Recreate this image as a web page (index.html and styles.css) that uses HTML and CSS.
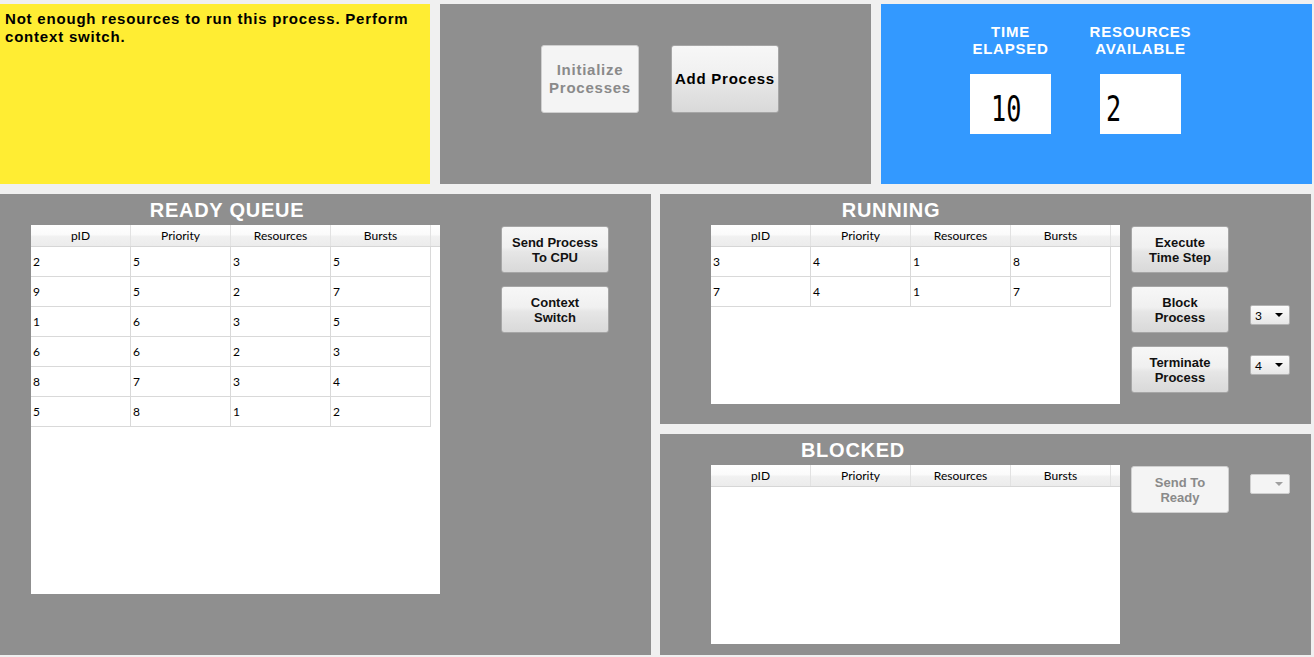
FILE: index.html
```html
<!DOCTYPE html>
<html>
<head>
<meta charset="utf-8">
<title>Process Scheduler</title>
<link rel="stylesheet" href="styles.css">
</head>
<body>
<div class="app">
  <div class="top">
    <div class="msg">Not enough resources to run this process. Perform context switch.</div>
    <div class="controls">
      <button class="btn btn-lg btn-init" disabled>Initialize Processes</button>
      <button class="btn btn-lg btn-add">Add Process</button>
    </div>
    <div class="stats">
      <div class="stat">
        <div class="stat-label">TIME<br>ELAPSED</div>
        <div class="lcd lcd-time"><span class="lcd-num">10</span></div>
      </div>
      <div class="stat">
        <div class="stat-label">RESOURCES<br>AVAILABLE</div>
        <div class="lcd lcd-res"><span class="lcd-num">2</span></div>
      </div>
    </div>
  </div>

  <div class="bottom">
    <section class="panel ready">
      <h2 class="title title-ready">READY QUEUE</h2>
      <div class="panel-body">
        <div class="tbl tbl-ready">
          <div class="thead"><div>pID</div><div>Priority</div><div>Resources</div><div>Bursts</div><div></div></div>
          <div class="trow"><div>2</div><div>5</div><div>3</div><div>5</div></div>
          <div class="trow"><div>9</div><div>5</div><div>2</div><div>7</div></div>
          <div class="trow"><div>1</div><div>6</div><div>3</div><div>5</div></div>
          <div class="trow"><div>6</div><div>6</div><div>2</div><div>3</div></div>
          <div class="trow"><div>8</div><div>7</div><div>3</div><div>4</div></div>
          <div class="trow"><div>5</div><div>8</div><div>1</div><div>2</div></div>
        </div>
        <div class="btn-col btn-col-ready">
          <button class="btn btn-wide">Send Process<br>To CPU</button>
          <button class="btn btn-wide">Context<br>Switch</button>
        </div>
      </div>
    </section>

    <div class="right-col">
      <section class="panel running">
        <h2 class="title title-running">RUNNING</h2>
        <div class="panel-body">
          <div class="tbl tbl-small">
            <div class="thead"><div>pID</div><div>Priority</div><div>Resources</div><div>Bursts</div><div></div></div>
            <div class="trow"><div>3</div><div>4</div><div>1</div><div>8</div></div>
            <div class="trow"><div>7</div><div>4</div><div>1</div><div>7</div></div>
          </div>
          <div class="btn-col btn-col-right">
            <button class="btn btn-narrow">Execute<br>Time Step</button>
            <button class="btn btn-narrow">Block<br>Process</button>
            <button class="btn btn-narrow">Terminate<br>Process</button>
          </div>
          <div class="dd-col dd-col-running">
            <div class="dd"><span>3</span><i class="arrow"></i></div>
            <div class="dd"><span>4</span><i class="arrow"></i></div>
          </div>
        </div>
      </section>

      <section class="panel blocked">
        <h2 class="title title-blocked">BLOCKED</h2>
        <div class="panel-body">
          <div class="tbl tbl-small">
            <div class="thead"><div>pID</div><div>Priority</div><div>Resources</div><div>Bursts</div><div></div></div>
          </div>
          <div class="btn-col btn-col-right">
            <button class="btn btn-narrow btn-disabled" disabled>Send To<br>Ready</button>
          </div>
          <div class="dd-col dd-col-blocked">
            <div class="dd dd-disabled"><span></span><i class="arrow"></i></div>
          </div>
        </div>
      </section>
    </div>
  </div>
</div>
</body>
</html>
```

FILE: styles.css
```css
* { box-sizing: border-box; }

body {
  margin: 0;
  background: #f0f0f0;
  font-family: "Liberation Sans", Arial, sans-serif;
}

.app {
  width: 1314px;
  height: 657px;
  padding-top: 4px;
}

/* ---------- top row ---------- */
.top {
  display: grid;
  grid-template-columns: 430px 431px 431px;
  column-gap: 10px;
  height: 180px;
}

.msg {
  background: #ffed33;
  color: #000;
  font-weight: bold;
  font-size: 15px;
  line-height: 18px;
  letter-spacing: 0.8px;
  padding: 6px 5px;
}

.controls {
  background: #8f8f8f;
  display: flex;
  align-items: flex-start;
  gap: 32px;
  padding: 41px 0 0 101px;
}

.stats {
  background: #3399ff;
  display: flex;
  gap: 49px;
  padding: 19px 0 0 89px;
}

.stat {
  width: 81px;
  display: flex;
  flex-direction: column;
  align-items: center;
}

.stat-label {
  color: #fff;
  font-weight: bold;
  font-size: 15px;
  line-height: 17px;
  letter-spacing: 0.75px;
  text-align: center;
  white-space: nowrap;
  height: 34px;
  margin-bottom: 17px;
}

.lcd {
  width: 81px;
  height: 60px;
  background: #fff;
  overflow: hidden;
  padding-top: 5px;
  font-family: "DejaVu Sans Mono", monospace;
  font-size: 36px;
  line-height: 60px;
  color: #000;
  align-self: flex-start;
}

.lcd-num {
  display: inline-block;
  transform: scaleX(0.7);
  transform-origin: left center;
}

.lcd-time { padding-left: 21px; }
.lcd-res { padding-left: 6px; }

/* ---------- buttons ---------- */
.btn {
  font-family: "Liberation Sans", Arial, sans-serif;
  font-weight: bold;
  font-size: 13px;
  line-height: 15px;
  color: #111;
  border: 1px solid #a6a6a6;
  border-radius: 3px;
  background: linear-gradient(#f7f7f7 0%, #f0f0f0 45%, #e6e6e6 55%, #d9d9d9 100%);
  padding: 0;
  text-align: center;
  cursor: default;
}

.btn-lg {
  height: 68px;
  font-size: 15px;
  line-height: 18px;
  letter-spacing: 0.75px;
}

.btn-init {
  width: 98px;
  background: #f4f4f4;
  border-color: #cfcfcf;
  color: #8a8a8a;
}

.btn-add {
  width: 108px;
  color: #000;
}

.btn-wide { width: 108px; height: 47px; }
.btn-narrow { width: 98px; height: 47px; }

.btn-disabled {
  background: #f4f4f4;
  border-color: #cfcfcf;
  color: #8a8a8a;
}

/* ---------- bottom ---------- */
.bottom {
  display: grid;
  grid-template-columns: 651px 651px;
  column-gap: 9px;
  margin-top: 10px;
  height: 461px;
}

.right-col {
  display: grid;
  grid-template-rows: 230px 221px;
  row-gap: 10px;
}

.panel {
  background: #8f8f8f;
  overflow: hidden;
}

.title {
  margin: 0;
  width: 300px;
  height: 31px;
  padding-top: 2px;
  line-height: 29px;
  color: #fff;
  font-weight: bold;
  font-size: 20px;
  letter-spacing: 0.75px;
  text-align: center;
}

.title-ready { margin-left: 77px; }
.title-running { margin-left: 81px; }
.title-blocked { margin-left: 43px; }

.panel-body {
  display: flex;
  align-items: flex-start;
}

.ready .panel-body { padding-left: 31px; }
.running .panel-body,
.blocked .panel-body { padding-left: 51px; }

/* ---------- tables ---------- */
.tbl {
  background: #fff;
  width: 409px;
  font-family: Lato, "Liberation Sans", sans-serif;
  font-size: 12px;
  color: #000;
}

.tbl-ready { height: 369px; }
.tbl-small { height: 179px; }

.thead {
  display: grid;
  grid-template-columns: repeat(4, 100px) 9px;
  height: 22px;
  background: linear-gradient(#ffffff 0%, #fbfbfb 45%, #f1f1f1 55%, #ececec 100%);
  border-bottom: 1px solid #d6d6d6;
}

.thead > div {
  text-align: center;
  line-height: 21px;
  border-right: 1px solid #e2e2e2;
}

.thead > div:last-child { border-right: none; }

.trow {
  display: grid;
  grid-template-columns: repeat(4, 100px);
  width: 400px;
  height: 30px;
}

.trow > div {
  border-right: 1px solid #d9d9d9;
  border-bottom: 1px solid #d9d9d9;
  padding-left: 2px;
  line-height: 29px;
}

/* ---------- button columns ---------- */
.btn-col {
  display: flex;
  flex-direction: column;
  gap: 13px;
  margin-top: 1px;
}

.btn-col-ready { margin-left: 61px; }
.btn-col-right { margin-left: 11px; }

/* ---------- dropdowns ---------- */
.dd-col {
  display: flex;
  flex-direction: column;
  gap: 30px;
  margin-left: 21px;
}

.dd-col-running { margin-top: 80px; }
.dd-col-blocked { margin-top: 9px; }

.dd {
  width: 40px;
  height: 20px;
  border: 1px solid #b3b3b3;
  border-radius: 2px;
  background: linear-gradient(#fcfcfc, #e7e7e7);
  display: flex;
  align-items: center;
  justify-content: space-between;
  padding: 0 6px 0 4px;
  font-family: Lato, "Liberation Sans", sans-serif;
  font-size: 12px;
  color: #000;
}

.arrow {
  width: 0;
  height: 0;
  border-left: 4px solid transparent;
  border-right: 4px solid transparent;
  border-top: 4px solid #000;
}

.dd-disabled {
  background: #f4f4f4;
  border-color: #cfcfcf;
}

.dd-disabled .arrow { border-top-color: #a0a0a0; }
```
